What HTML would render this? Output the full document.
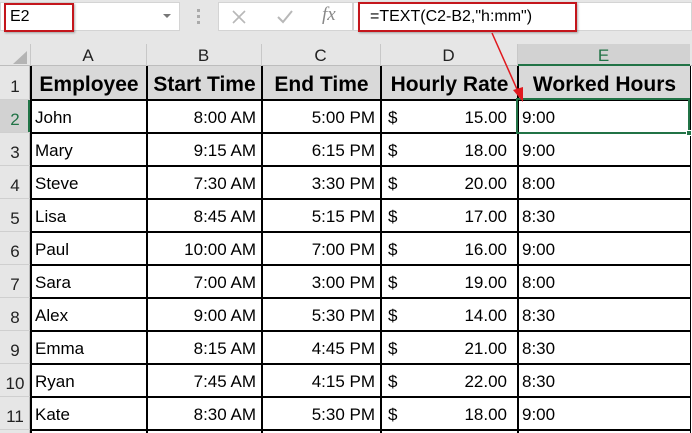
<!DOCTYPE html>
<html><head><meta charset="utf-8"><style>
body{margin:0;width:692px;height:433px;overflow:hidden;background:#fff;font-family:"Liberation Sans",Arial,sans-serif;position:relative}
.a{position:absolute;box-sizing:border-box}
.t{position:absolute;font-size:17px;color:#000;white-space:nowrap;line-height:20px}
.r{position:absolute;font-size:17px;color:#000;white-space:nowrap;line-height:20px;text-align:right}
.h{position:absolute;top:73px;font-size:21px;font-weight:bold;color:#000;white-space:nowrap;text-align:center;line-height:24px}
.n{position:absolute;left:0;width:30px;text-align:center;font-size:17px;color:#222;line-height:20px}
.ch{position:absolute;top:44px;height:22px;line-height:24px;text-align:center;font-size:17px;color:#222}
.vl{position:absolute;top:66px;width:2px;height:367px;background:#000}
.hl{position:absolute;left:31px;width:660px;height:2px;background:#000}
.nl{position:absolute;left:0;width:30px;height:1px;background:#cfcfcf}
</style></head><body>
<div class="a" style="left:0;top:0;width:692px;height:44px;background:#e6e6e6"></div>
<div class="a" style="left:0;top:2px;width:180px;height:29px;background:#fff;border:1px solid #d4d4d4"></div>
<div class="t" style="left:10px;top:7px;font-size:16px">E2</div>
<div class="a" style="left:163px;top:14px;width:0;height:0;border-left:4px solid transparent;border-right:4px solid transparent;border-top:4px solid #777"></div>
<div class="a" style="left:4px;top:3px;width:70px;height:29px;border:2px solid #c4161c;box-shadow:1px 1px 2px rgba(0,0,0,.3)"></div>
<div class="a" style="left:197px;top:9px;width:3px;height:3px;background:#aaa"></div>
<div class="a" style="left:197px;top:15px;width:3px;height:3px;background:#aaa"></div>
<div class="a" style="left:197px;top:21px;width:3px;height:3px;background:#aaa"></div>
<div class="a" style="left:218px;top:2px;width:135px;height:29px;background:#fff;border:1px solid #d4d4d4"></div>
<svg style="position:absolute;left:230px;top:8px" width="18" height="18"><path d="M3 3L15 15M15 3L3 15" stroke="#b8b8b8" stroke-width="1.6"/></svg>
<svg style="position:absolute;left:275px;top:8px" width="20" height="18"><path d="M3 9L8 14L17 3" stroke="#b8b8b8" stroke-width="2" fill="none"/></svg>
<div class="t" style="left:322px;top:5px;font-family:'Liberation Serif',serif;font-style:italic;font-size:19px;color:#888">fx</div>
<div class="a" style="left:353px;top:2px;width:339px;height:29px;background:#fff;border:1px solid #d4d4d4"></div>
<div class="t" style="left:370px;top:7px;font-size:16px">=TEXT(C2-B2,"h:mm")</div>
<div class="a" style="left:358px;top:2px;width:219px;height:30px;border:2px solid #c4161c;box-shadow:1px 1px 2px rgba(0,0,0,.3)"></div>

<div class="a" style="left:0;top:44px;width:692px;height:22px;background:#e6e6e6;border-bottom:1px solid #bdbdbd"></div>
<div class="a" style="left:517px;top:44px;width:173px;height:22px;background:#d2d2d2;border-bottom:2px solid #217346"></div>
<svg style="position:absolute;left:10px;top:50px" width="18" height="15"><path d="M17 1L17 14L3 14Z" fill="#b4b4b4"/></svg>
<div class="a" style="left:30px;top:44px;width:1px;height:22px;background:#c8c8c8"></div>
<div class="a" style="left:146px;top:44px;width:1px;height:22px;background:#c8c8c8"></div>
<div class="a" style="left:261px;top:44px;width:1px;height:22px;background:#c8c8c8"></div>
<div class="a" style="left:380px;top:44px;width:1px;height:22px;background:#c8c8c8"></div>
<div class="a" style="left:517px;top:44px;width:1px;height:22px;background:#c8c8c8"></div>
<div class="ch" style="left:30px;width:116px">A</div>
<div class="ch" style="left:146px;width:115px">B</div>
<div class="ch" style="left:261px;width:119px">C</div>
<div class="ch" style="left:380px;width:137px">D</div>
<div class="ch" style="left:517px;width:173px;color:#217346">E</div>

<div class="a" style="left:0;top:66px;width:30px;height:367px;background:#e6e6e6;border-right:1px solid #bdbdbd"></div>
<div class="a" style="left:0;top:100px;width:30px;height:33px;background:#d2d2d2;border-right:2px solid #217346"></div>
<div class="nl" style="top:99px"></div><div class="nl" style="top:132px"></div><div class="nl" style="top:165px"></div><div class="nl" style="top:198px"></div><div class="nl" style="top:231px"></div><div class="nl" style="top:264px"></div><div class="nl" style="top:297px"></div><div class="nl" style="top:330px"></div><div class="nl" style="top:363px"></div><div class="nl" style="top:396px"></div><div class="nl" style="top:429px"></div>
<div class="n" style="top:77px">1</div>
<div class="n" style="top:110px;color:#217346">2</div>
<div class="n" style="top:143px">3</div>
<div class="n" style="top:176px">4</div>
<div class="n" style="top:209px">5</div>
<div class="n" style="top:242px">6</div>
<div class="n" style="top:275px">7</div>
<div class="n" style="top:308px">8</div>
<div class="n" style="top:341px">9</div>
<div class="n" style="top:374px">10</div>
<div class="n" style="top:407px">11</div>

<div class="a" style="left:31px;top:66px;width:659px;height:34px;background:#d9d9d9"></div>
<div class="vl" style="left:30px"></div><div class="vl" style="left:146px"></div><div class="vl" style="left:261px"></div><div class="vl" style="left:380px"></div><div class="vl" style="left:517px"></div><div class="vl" style="left:690px;width:1px"></div>
<div class="hl" style="top:99px"></div><div class="hl" style="top:132px"></div><div class="hl" style="top:165px"></div><div class="hl" style="top:198px"></div><div class="hl" style="top:231px"></div><div class="hl" style="top:264px"></div><div class="hl" style="top:297px"></div><div class="hl" style="top:330px"></div><div class="hl" style="top:363px"></div><div class="hl" style="top:396px"></div><div class="hl" style="top:429px"></div>

<div class="h" style="left:32px;width:114px">Employee</div>
<div class="h" style="left:148px;width:113px">Start Time</div>
<div class="h" style="left:263px;width:117px">End Time</div>
<div class="h" style="left:382px;width:135px">Hourly Rate</div>
<div class="h" style="left:519px;width:171px">Worked Hours</div>

<div style="position:absolute;left:0;top:108px;width:692px">
<div class="t" style="left:35px;top:0">John</div><div class="r" style="right:436px;top:0">8:00 AM</div><div class="r" style="right:317px;top:0">5:00 PM</div><div class="t" style="left:388px;top:0">$</div><div class="r" style="right:185px;top:0">15.00</div><div class="t" style="left:522px;top:0">9:00</div>
<div class="t" style="left:35px;top:33px">Mary</div><div class="r" style="right:436px;top:33px">9:15 AM</div><div class="r" style="right:317px;top:33px">6:15 PM</div><div class="t" style="left:388px;top:33px">$</div><div class="r" style="right:185px;top:33px">18.00</div><div class="t" style="left:522px;top:33px">9:00</div>
<div class="t" style="left:35px;top:66px">Steve</div><div class="r" style="right:436px;top:66px">7:30 AM</div><div class="r" style="right:317px;top:66px">3:30 PM</div><div class="t" style="left:388px;top:66px">$</div><div class="r" style="right:185px;top:66px">20.00</div><div class="t" style="left:522px;top:66px">8:00</div>
<div class="t" style="left:35px;top:99px">Lisa</div><div class="r" style="right:436px;top:99px">8:45 AM</div><div class="r" style="right:317px;top:99px">5:15 PM</div><div class="t" style="left:388px;top:99px">$</div><div class="r" style="right:185px;top:99px">17.00</div><div class="t" style="left:522px;top:99px">8:30</div>
<div class="t" style="left:35px;top:132px">Paul</div><div class="r" style="right:436px;top:132px">10:00 AM</div><div class="r" style="right:317px;top:132px">7:00 PM</div><div class="t" style="left:388px;top:132px">$</div><div class="r" style="right:185px;top:132px">16.00</div><div class="t" style="left:522px;top:132px">9:00</div>
<div class="t" style="left:35px;top:165px">Sara</div><div class="r" style="right:436px;top:165px">7:00 AM</div><div class="r" style="right:317px;top:165px">3:00 PM</div><div class="t" style="left:388px;top:165px">$</div><div class="r" style="right:185px;top:165px">19.00</div><div class="t" style="left:522px;top:165px">8:00</div>
<div class="t" style="left:35px;top:198px">Alex</div><div class="r" style="right:436px;top:198px">9:00 AM</div><div class="r" style="right:317px;top:198px">5:30 PM</div><div class="t" style="left:388px;top:198px">$</div><div class="r" style="right:185px;top:198px">14.00</div><div class="t" style="left:522px;top:198px">8:30</div>
<div class="t" style="left:35px;top:231px">Emma</div><div class="r" style="right:436px;top:231px">8:15 AM</div><div class="r" style="right:317px;top:231px">4:45 PM</div><div class="t" style="left:388px;top:231px">$</div><div class="r" style="right:185px;top:231px">21.00</div><div class="t" style="left:522px;top:231px">8:30</div>
<div class="t" style="left:35px;top:264px">Ryan</div><div class="r" style="right:436px;top:264px">7:45 AM</div><div class="r" style="right:317px;top:264px">4:15 PM</div><div class="t" style="left:388px;top:264px">$</div><div class="r" style="right:185px;top:264px">22.00</div><div class="t" style="left:522px;top:264px">8:30</div>
<div class="t" style="left:35px;top:297px">Kate</div><div class="r" style="right:436px;top:297px">8:30 AM</div><div class="r" style="right:317px;top:297px">5:30 PM</div><div class="t" style="left:388px;top:297px">$</div><div class="r" style="right:185px;top:297px">18.00</div><div class="t" style="left:522px;top:297px">9:00</div>
</div>

<div class="a" style="left:516px;top:98px;width:174px;height:36px;border:2px solid #217346"></div>
<div class="a" style="left:686px;top:130px;width:6px;height:6px;background:#217346;border:1px solid #fff"></div>
<svg style="position:absolute;left:0;top:0" width="692" height="433"><line x1="492" y1="33" x2="520" y2="96" stroke="#e0191e" stroke-width="1.5"/><path d="M523 102L513 90L523 87Z" fill="#e0191e"/></svg>
</body></html>
